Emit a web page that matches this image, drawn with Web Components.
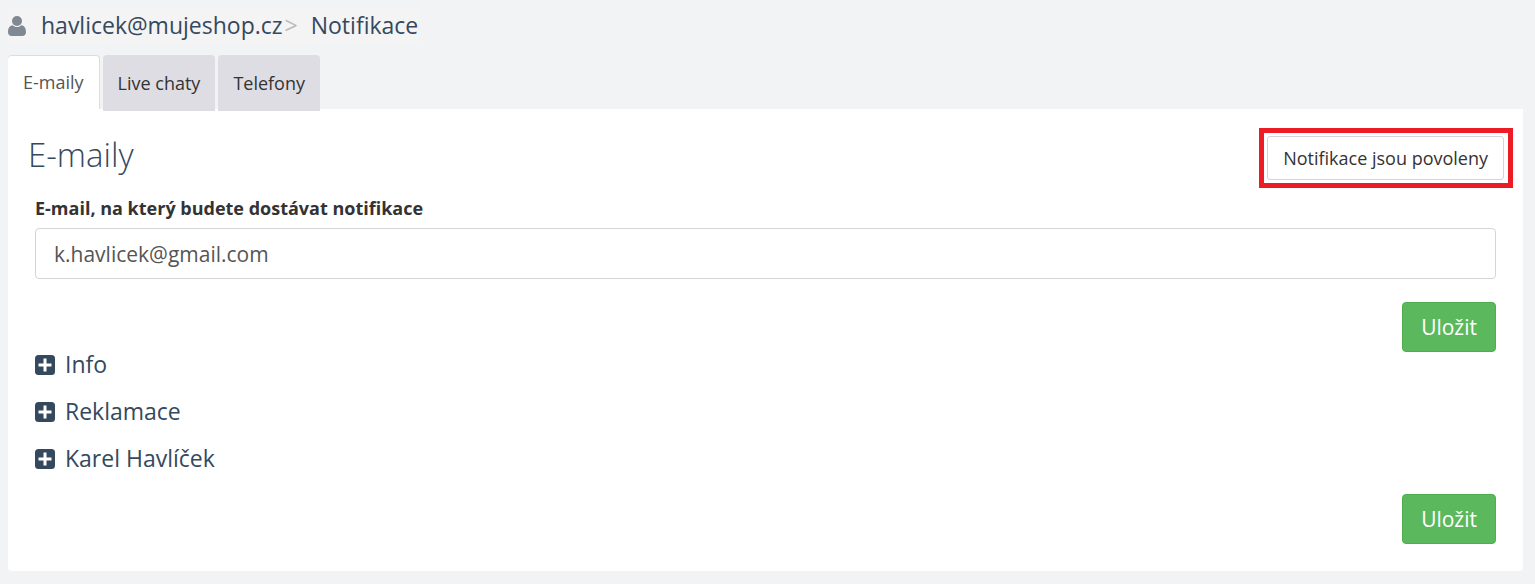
<!DOCTYPE html>
<html lang="cs">
<head>
<meta charset="utf-8">
<title>Notifikace</title>
<style>
  body { margin: 0; background: #f1f3f5; font-family: "Open Sans", "Noto Sans", sans-serif; color: #333; }
</style>
</head>
<body>
<notification-page></notification-page>

<template id="crumbs-tpl">
  <style>
    :host { display: flex; }
    nav { display: flex; align-items: center; height: 34px; background: #f4f4f4; font-size: 23px; line-height: 30px; }
    svg { width: 18px; height: 20px; margin-right: 15px; }
    a, .sep { padding-bottom: 2px; }
    a { color: #34495e; text-decoration: none; white-space: nowrap; }
    .sep { color: #bbb; margin: 0 13px 0 2px; }
  </style>
  <nav aria-label="Drobečková navigace">
    <svg viewBox="0 0 18 20" fill="#7f8893" aria-hidden="true"><circle cx="9" cy="5" r="5"/><path d="M4.6 9.2C1.3 9.6 0 12.500 0 16.200C0 18.500 1.500 20 3.700 20H14.300C16.500 20 18 18.500 18 16.200C18 12.500 16.700 9.600 13.400 9.200C12.200 10.400 10.700 11 9 11S5.800 10.400 4.600 9.200Z"/></svg>
    <a href="#ucet">havlicek@mujeshop.cz</a><span class="sep">&gt;</span><a href="#notifikace">Notifikace</a>
  </nav>
</template>

<template id="tab-tpl">
  <style>
    :host { display: block; }
    a { display: block; box-sizing: border-box; height: 56px; padding: 16px 15px; border-radius: 4px 4px 0 0; background: #dddde3; color: #333; font-size: 18px; line-height: 25px; text-decoration: none; white-space: nowrap; }
    :host([active]) a { height: 54px; padding: 14px 15px; border: 1px solid #ddd; border-width: 1px 1px 0 0; background: #fff; color: #555; }
  </style>
  <a href="#"><slot></slot></a>
</template>

<template id="button-tpl">
  <style>
    :host { display: block; }
    button { display: block; box-sizing: border-box; margin: 0; font-family: inherit; white-space: nowrap; cursor: pointer; }
    :host([kind="primary"]) button { height: 50px; padding: 0 18px; border: 1px solid #4cae4c; border-radius: 4px; background: #5cb85c; color: #fff; font-size: 21px; line-height: 28px; }
    :host([kind="plain"]) button { height: 44px; padding: 0 15px; border: 1px solid #d5d5d8; border-radius: 3px; background: #fff; color: #333; font-size: 18px; line-height: 25px; }
  </style>
  <button type="button"><slot></slot></button>
</template>

<template id="field-tpl">
  <style>
    :host { display: block; }
    label { display: block; margin-bottom: 7px; font-size: 18px; line-height: 25px; font-weight: 700; }
    input { display: block; box-sizing: border-box; width: 100%; height: 51px; margin: 0; padding: 0 18px; border: 1px solid #d5d5d8; border-radius: 4px; background: #fff; color: #555; font-family: inherit; font-size: 21px; }
  </style>
  <label for="mail"></label>
  <input id="mail" type="email">
</template>

<template id="toggle-tpl">
  <style>
    :host { display: flex; }
    button { display: flex; align-items: center; gap: 10px; height: 26px; margin: 0; padding: 0; border: 0; background: none; color: #34495e; font-family: inherit; font-size: 23px; line-height: 24px; cursor: pointer; }
    svg { width: 20px; height: 20px; }
    span { padding-bottom: 2px; }
  </style>
  <button type="button" aria-expanded="false">
    <svg viewBox="0 0 20 20" aria-hidden="true"><rect width="20" height="20" rx="3.500" fill="#34495e"/><path d="M10 3.500V16.500M3.500 10H16.500" stroke="#fff" stroke-width="3"/></svg>
    <span><slot></slot></span>
  </button>
</template>

<template id="page-tpl">
  <style>
    :host { display: block; padding: 9px 12px 12px 8px; }
    .tabs { display: flex; gap: 3px; height: 54px; margin-top: 12px; position: relative; }
    main { display: block; padding: 19px 27px 27px; background: #fff; border-radius: 0 0 4px 4px; }
    header { display: flex; justify-content: space-between; align-items: flex-start; margin: 0 -17px 0 -7px; }
    h1 { margin: 3px 0 0; color: #34495e; font-size: 33px; line-height: 48px; font-weight: 300; }
    .mark { padding: 3px 4px 3px 3px; border: 5px solid #ed1c24; }
    e-field { margin-top: 8px; }
    .actions { display: flex; justify-content: flex-end; }
    .first { margin-top: 23px; }
    .groups { display: grid; gap: 21px; margin-bottom: 22px; }
  </style>
  <e-crumbs></e-crumbs>
  <nav class="tabs" aria-label="Kanály">
    <e-tab active>E-maily</e-tab>
    <e-tab>Live chaty</e-tab>
    <e-tab>Telefony</e-tab>
  </nav>
  <main>
    <header>
      <h1>E-maily</h1>
      <div class="mark"><e-button kind="plain">Notifikace jsou povoleny</e-button></div>
    </header>
    <e-field label="E-mail, na který budete dostávat notifikace" value="k.havlicek@gmail.com"></e-field>
    <div class="actions first"><e-button kind="primary">Uložit</e-button></div>
    <div class="groups">
      <e-toggle>Info</e-toggle>
      <e-toggle>Reklamace</e-toggle>
      <e-toggle>Karel Havlíček</e-toggle>
    </div>
    <div class="actions"><e-button kind="primary">Uložit</e-button></div>
  </main>
</template>

<script>
  class Base extends HTMLElement {
    constructor() {
      super();
      const tpl = document.getElementById(this.constructor.template);
      this.attachShadow({ mode: "open" }).append(tpl.content.cloneNode(true));
    }
  }
  class Crumbs extends Base { static template = "crumbs-tpl"; }
  class Tab extends Base {
    static template = "tab-tpl";
    connectedCallback() {
      if (this.hasAttribute("active")) this.shadowRoot.querySelector("a").setAttribute("aria-current", "page");
    }
  }
  class ActionButton extends Base { static template = "button-tpl"; }
  class Field extends Base {
    static template = "field-tpl";
    connectedCallback() {
      this.shadowRoot.querySelector("label").textContent = this.getAttribute("label");
      this.shadowRoot.querySelector("input").value = this.getAttribute("value") || "";
    }
  }
  class Toggle extends Base {
    static template = "toggle-tpl";
    connectedCallback() {
      const button = this.shadowRoot.querySelector("button");
      button.onclick = () => button.setAttribute("aria-expanded", button.getAttribute("aria-expanded") !== "true");
    }
  }
  class NotificationPage extends Base { static template = "page-tpl"; }

  customElements.define("e-crumbs", Crumbs);
  customElements.define("e-tab", Tab);
  customElements.define("e-button", ActionButton);
  customElements.define("e-field", Field);
  customElements.define("e-toggle", Toggle);
  customElements.define("notification-page", NotificationPage);
</script>
</body>
</html>
